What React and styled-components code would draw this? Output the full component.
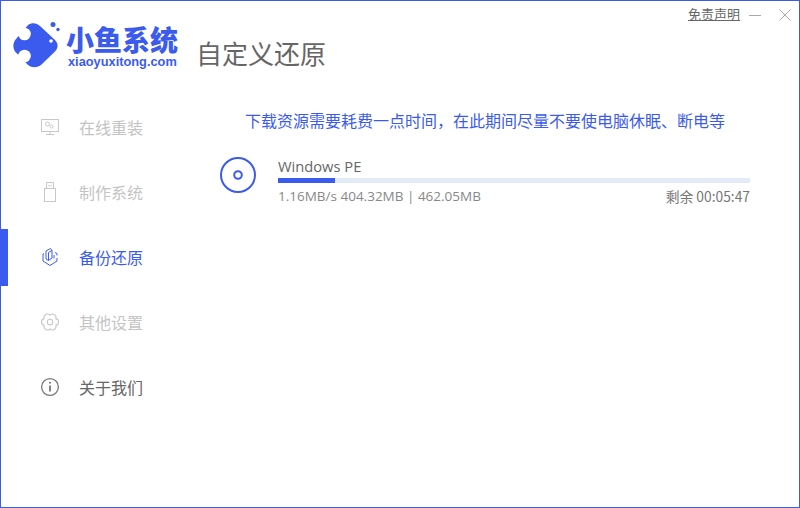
import styled, { createGlobalStyle } from 'styled-components';

const BLUE = '#3b5bef';

const GlobalStyle = createGlobalStyle`
	html, body {
		margin: 0;
		padding: 0;
		background: #fff;
	}
	* {
		box-sizing: border-box;
	}
`;

function FishLogo() {
	return (
		<LogoSvg viewBox="0 0 50 50" width="50" height="50">
			<path
				fill={BLUE}
				d="M15 3 C19 0 24 1 27 4 L41.500 17.500 C45.500 21 45.500 26 42 29.500 L28.500 42.500 C24.500 46 19 46 15 43 L3 30.500 C-0.500 27 -0.500 21 3 17 Z"
			/>
			<circle cx="11.500" cy="12" r="6.300" fill="#fff" />
			<circle cx="11.500" cy="34" r="6.300" fill="#fff" />
			<circle cx="38" cy="19" r="1.800" fill="#fff" />
			<circle cx="40" cy="2.500" r="2.500" fill={BLUE} />
			<circle cx="45" cy="7.500" r="1.700" fill={BLUE} />
		</LogoSvg>
	);
}

function MonitorIcon() {
	return (
		<svg width="20" height="20" viewBox="0 0 20 20" fill="none" stroke="#c8c8c8" strokeWidth="1">
			<rect x="1.500" y="2.500" width="17" height="12" />
			<circle cx="7.500" cy="7" r="2" />
			<circle cx="11.500" cy="9.500" r="1.500" />
			<path d="M10 14.500 V17.500 M6 17.500 H14" />
		</svg>
	);
}

function UsbIcon() {
	return (
		<svg width="20" height="22" viewBox="0 0 20 22" fill="none" stroke="#c8c8c8" strokeWidth="1">
			<rect x="4.500" y="7.500" width="11" height="13" />
			<path d="M6.500 7.500 V1.500 H13.500 V7.500 M9 4 V5.500 M11 4 V5.500" />
		</svg>
	);
}

function CubeIcon() {
	return (
		<svg width="20" height="20" viewBox="0 0 20 20" fill="none" stroke={BLUE} strokeWidth="1">
			<path d="M4 6.500 L3 7 V14 L10 18.500 L17 14 V11 M17 8.500 V6.500 L15 5.500" />
			<path d="M6 7 V4 L10.500 1.500 L12 3.500 V11 M8.500 13.500 V5.500 L12 3.500 M6 7 V12 L8.500 13.500 L12 11 M14 8 L14 11.500" />
		</svg>
	);
}

function GearIcon() {
	return (
		<svg width="20" height="20" viewBox="0 0 20 20" fill="none" stroke="#c8c8c8" strokeWidth="1.100">
			<path d="M10 3.200 A3.500 3.500 0 0 1 15.890 6.600 A3.500 3.500 0 0 1 15.890 13.400 A3.500 3.500 0 0 1 10 16.800 A3.500 3.500 0 0 1 4.110 13.400 A3.500 3.500 0 0 1 4.110 6.600 A3.500 3.500 0 0 1 10 3.200 Z" />
			<circle cx="10" cy="10" r="2.800" />
		</svg>
	);
}

function InfoIcon() {
	return (
		<svg width="20" height="20" viewBox="0 0 20 20" fill="none" stroke="#777" strokeWidth="1.300">
			<circle cx="10" cy="10" r="8.400" />
			<path d="M10 8.500 V14.500" strokeWidth="1.800" />
			<circle cx="10" cy="5.800" r="1" fill="#777" stroke="none" />
		</svg>
	);
}

function DiscIcon() {
	return (
		<svg width="38" height="38" viewBox="0 0 38 38" fill="none" stroke={BLUE}>
			<circle cx="19" cy="19" r="17" strokeWidth="2" />
			<circle cx="19" cy="19" r="3.800" strokeWidth="2" />
		</svg>
	);
}

const NAV_ITEMS = [
	{ label: '在线重装', Icon: MonitorIcon, state: 'disabled' },
	{ label: '制作系统', Icon: UsbIcon, state: 'disabled' },
	{ label: '备份还原', Icon: CubeIcon, state: 'active' },
	{ label: '其他设置', Icon: GearIcon, state: 'disabled' },
	{ label: '关于我们', Icon: InfoIcon, state: 'normal' },
];

const NAV_COLORS = {
	disabled: '#c4c4c4',
	active: BLUE,
	normal: '#666',
};

export default function App() {
	return (
		<Window>
			<GlobalStyle />
			<Header>
				<Brand>
					<FishLogo />
					<BrandText>
						<BrandName>小鱼系统</BrandName>
						<BrandUrl>xiaoyuxitong.com</BrandUrl>
					</BrandText>
				</Brand>
				<PageTitle>自定义还原</PageTitle>
				<Controls>
					<Disclaimer>免责声明</Disclaimer>
					<Minimize />
					<svg width="12" height="12" viewBox="0 0 12 12" stroke="#aaa" strokeWidth="1">
						<path d="M0.500 0.500 L11.500 11.500 M11.500 0.500 L0.500 11.500" />
					</svg>
				</Controls>
			</Header>
			<Body>
				<Sidebar>
					{NAV_ITEMS.map(({ label, Icon, state }) => (
						<NavRow key={label}>
							<Indicator $active={state === 'active'} />
							<NavIcon>
								<Icon />
							</NavIcon>
							<NavLabel $state={state}>{label}</NavLabel>
						</NavRow>
					))}
				</Sidebar>
				<Main>
					<Notice>下载资源需要耗费一点时间，在此期间尽量不要使电脑休眠、断电等</Notice>
					<Download>
						<DiscIcon />
						<DownloadInfo>
							<FileName>Windows PE</FileName>
							<Track>
								<Fill style={{ width: '12%' }} />
							</Track>
							<StatsRow>
								<Stats>1.16MB/s 404.32MB | 462.05MB</Stats>
								<Remaining>剩余 00:05:47</Remaining>
							</StatsRow>
						</DownloadInfo>
					</Download>
				</Main>
			</Body>
		</Window>
	);
}

const Window = styled.div`
	width: 800px;
	height: 508px;
	border: 1px solid ${BLUE};
	background: #fff;
	display: flex;
	flex-direction: column;
	font-family: 'Noto Sans CJK SC', 'Open Sans', sans-serif;
	overflow: hidden;
`;

const Header = styled.div`
	height: 93px;
	display: flex;
	align-items: flex-start;
	flex-shrink: 0;
`;

const Brand = styled.div`
	display: flex;
	align-items: flex-start;
	width: 195px;
	padding: 21px 0 0 12px;
`;

const LogoSvg = styled.svg`
	flex-shrink: 0;
`;

const BrandText = styled.div`
	display: flex;
	flex-direction: column;
	margin-left: 3px;
	margin-top: 2px;
`;

const BrandName = styled.div`
	font-size: 28px;
	font-weight: 900;
	line-height: 30px;
	color: ${BLUE};
	white-space: nowrap;
`;

const BrandUrl = styled.div`
	margin-top: 2px;
	margin-left: 2px;
	font-family: 'Liberation Sans', sans-serif;
	font-size: 12.800px;
	font-weight: 700;
	line-height: 12px;
	color: ${BLUE};
	white-space: nowrap;
`;

const PageTitle = styled.h1`
	margin: 33px 0 0;
	font-size: 26px;
	font-weight: 400;
	line-height: 38px;
	color: #666;
`;

const Controls = styled.div`
	margin-left: auto;
	display: flex;
	align-items: center;
	height: 28px;
	padding-right: 8px;
`;

const Disclaimer = styled.span`
	margin-bottom: 3px;
	font-size: 13px;
	color: #666;
	text-decoration: underline;
	line-height: 18px;
`;

const Minimize = styled.span`
	width: 12px;
	height: 1px;
	background: #aaa;
	margin: 0 18px 0 9px;
`;

const Body = styled.div`
	flex: 1;
	display: flex;
`;

const Sidebar = styled.nav`
	width: 218px;
	flex-shrink: 0;
	display: flex;
	flex-direction: column;
`;

const NavRow = styled.div`
	height: 65px;
	display: flex;
	align-items: center;
`;

const Indicator = styled.span`
	width: 7px;
	height: 57px;
	margin-top: 2px;
	background: ${(props) => (props.$active ? BLUE : 'transparent')};
`;

const NavIcon = styled.span`
	width: 20px;
	height: 22px;
	margin-left: 32px;
	display: flex;
	align-items: center;
	justify-content: center;
`;

const NavLabel = styled.span`
	margin-left: 19px;
	font-size: 16px;
	line-height: 22px;
	color: ${(props) => NAV_COLORS[props.$state]};
`;

const Main = styled.main`
	flex: 1;
	padding-right: 49px;
`;

const Notice = styled.p`
	margin: 15px 0 0 26px;
	font-size: 16px;
	line-height: 22px;
	color: ${BLUE};
	white-space: nowrap;
`;

const Download = styled.div`
	display: flex;
	align-items: flex-start;
	margin-top: 25px;
`;

const DownloadInfo = styled.div`
	flex: 1;
	margin-left: 21px;
`;

const FileName = styled.div`
	font-family: 'Open Sans', sans-serif;
	font-size: 14.700px;
	line-height: 20px;
	color: #666;
`;

const Track = styled.div`
	height: 5px;
	margin-top: 2px;
	background: #e3ebf8;
`;

const Fill = styled.div`
	height: 100%;
	background: ${BLUE};
`;

const StatsRow = styled.div`
	display: flex;
	justify-content: space-between;
	margin-top: 4px;
`;

const Stats = styled.span`
	font-family: 'Open Sans', sans-serif;
	font-size: 13.500px;
	line-height: 18px;
	color: #888;
`;

const Remaining = styled.span`
	font-size: 13.800px;
	line-height: 18px;
	color: #777;
`;
